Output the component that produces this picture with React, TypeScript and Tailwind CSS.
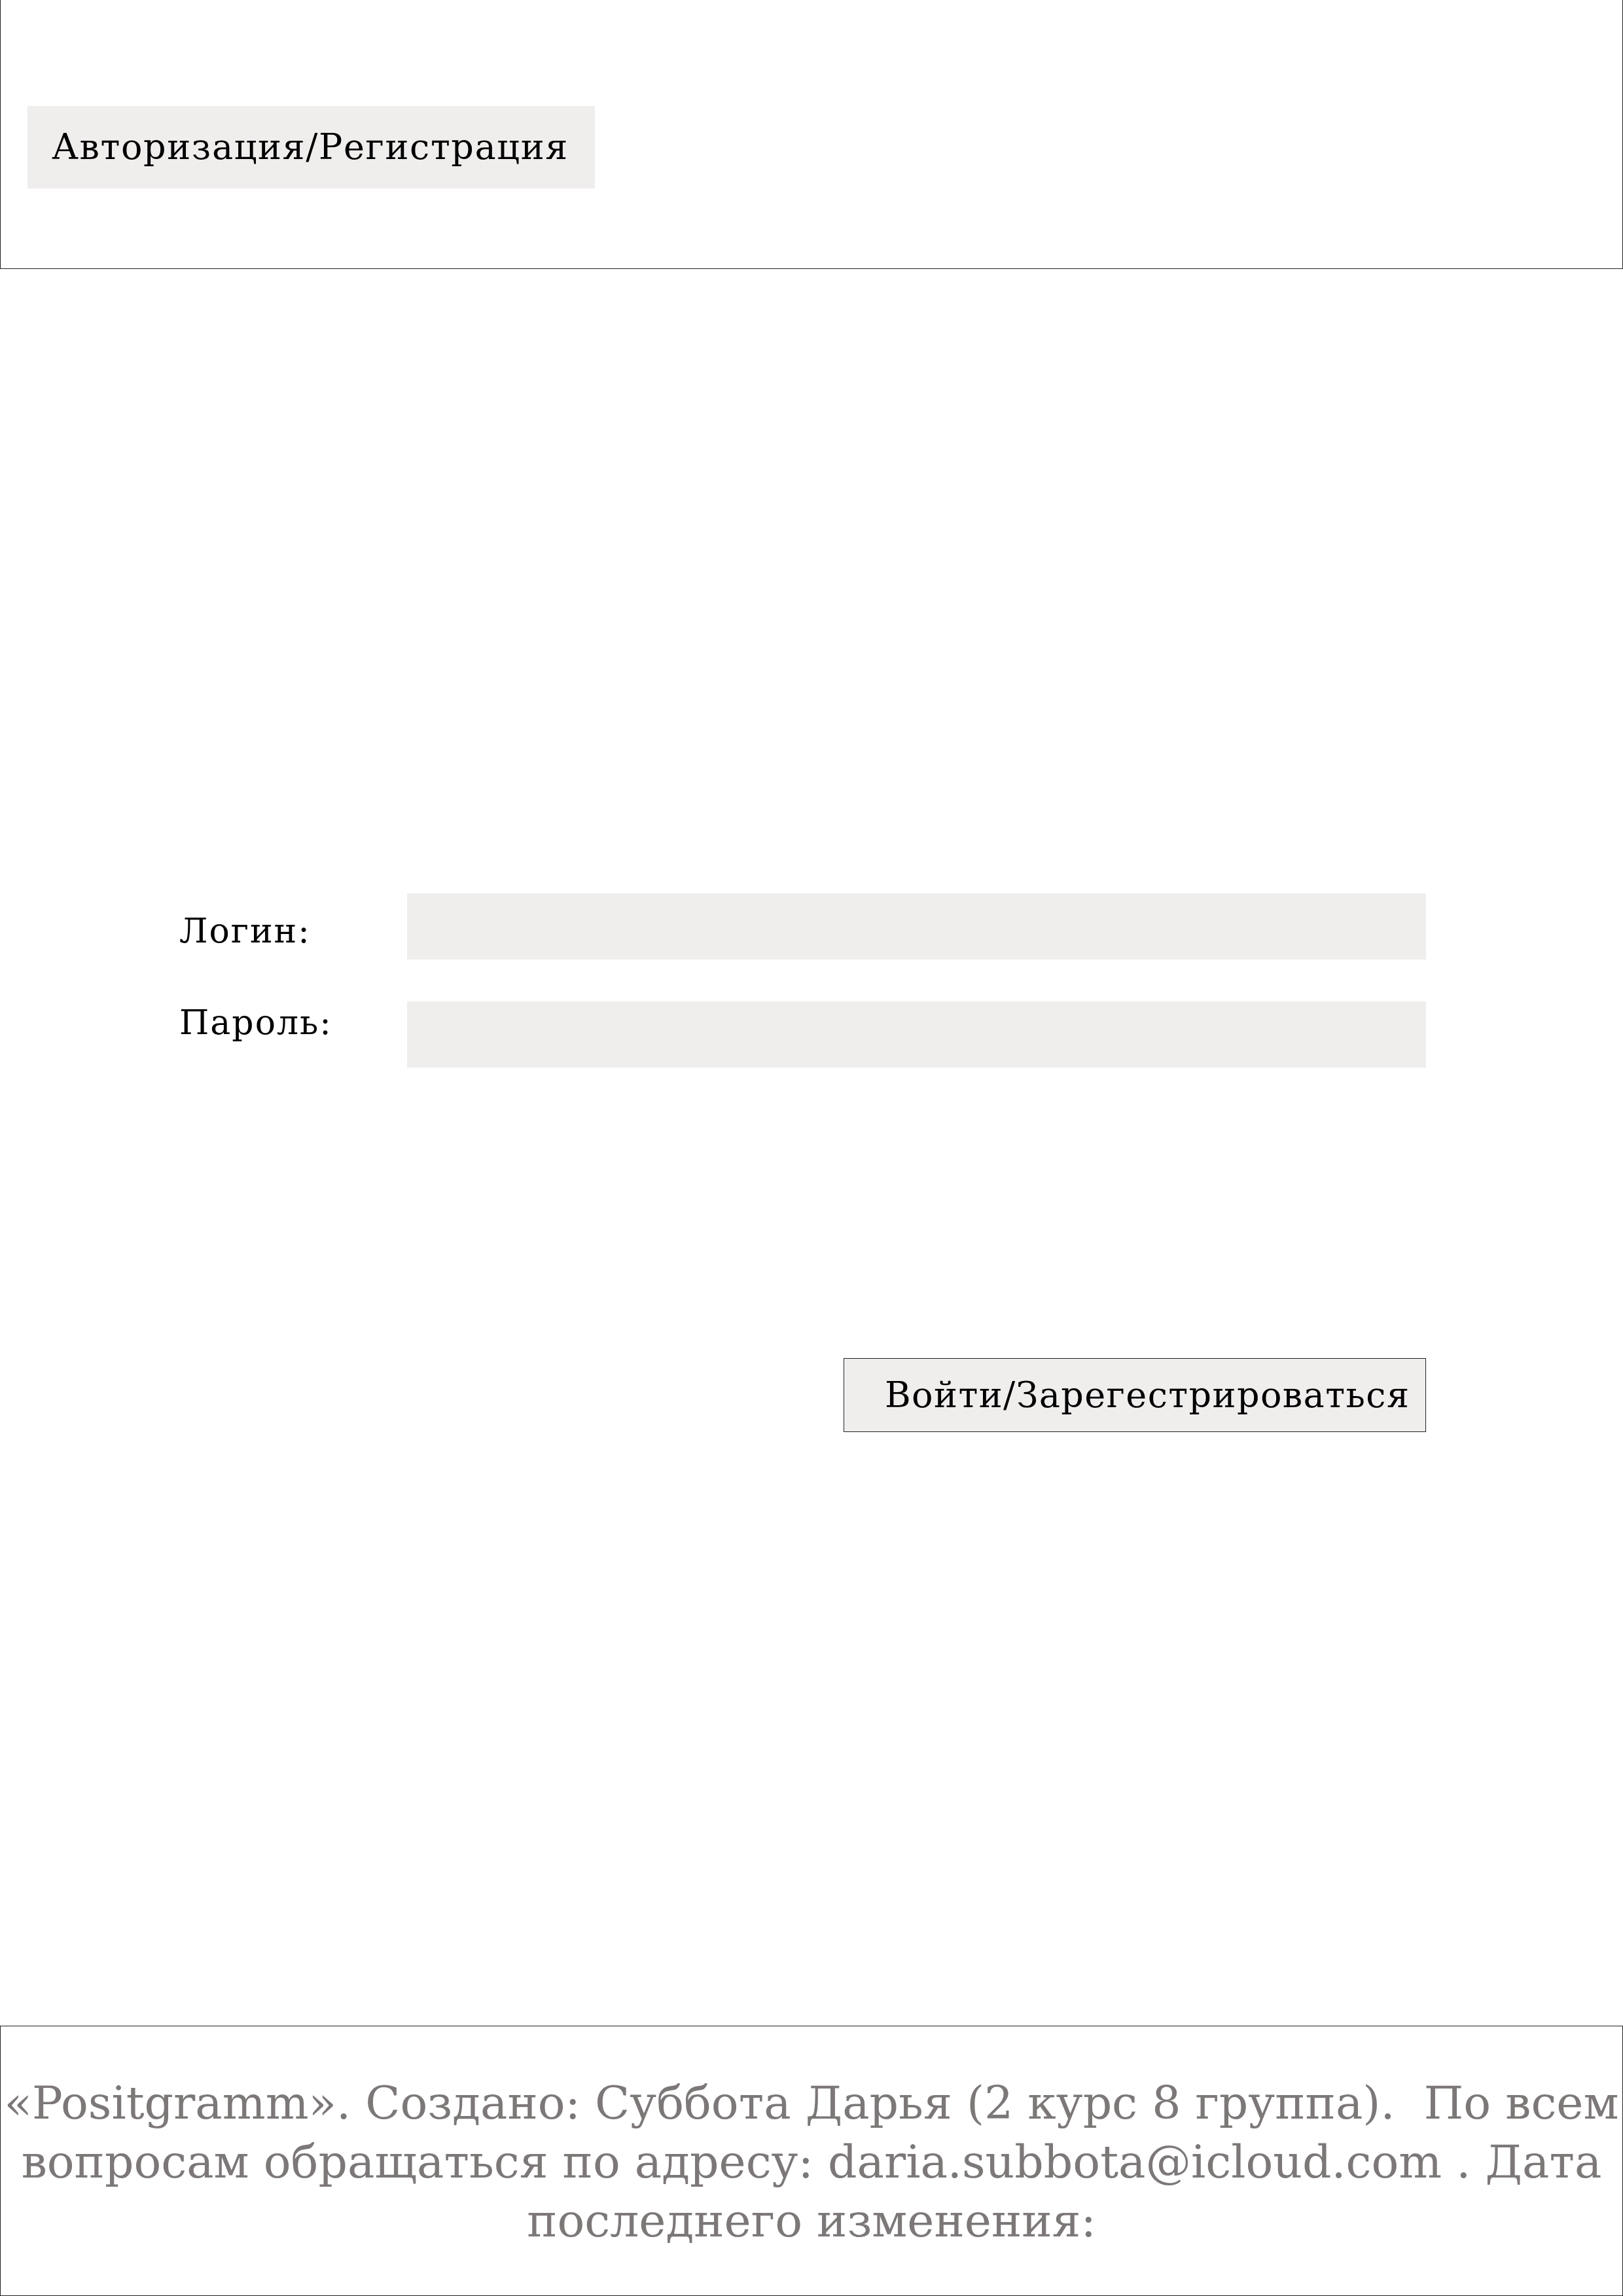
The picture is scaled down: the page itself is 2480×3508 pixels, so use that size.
const serif = "font-['DejaVu_Serif',serif]";

export default function App() {
  return (
    <div className={`min-h-[3508px] w-[2480px] flex flex-col bg-white text-black ${serif}`}>
      {/* Header */}
      <header className="h-[411px] border-l border-r border-b border-[#222] pt-[162px] pl-[41px]">
        <button className="w-[867px] h-[126px] bg-[#f0eded] flex items-center pl-[37px] text-[54px] leading-none tracking-[1.6px]">
          Авторизация/Регистрация
        </button>
      </header>

      {/* Form */}
      <main className="pt-[954px] pl-[274px]">
        <div className="grid grid-cols-[348px_1557px] gap-y-[64px]">
          <label className="pt-[31px] text-[52px] leading-none tracking-[2px]">Логин:</label>
          <input type="text" className="h-[101px] bg-[#f0eded] outline-none px-6 text-[48px]" />
          <label className="pt-[6px] text-[52px] leading-none tracking-[2px]">Пароль:</label>
          <input type="password" className="h-[101px] bg-[#f0eded] outline-none px-6 text-[48px]" />
        </div>
        <div className="w-[1905px] flex justify-end mt-[444px]">
          <button className="w-[890px] h-[113px] border border-[#222] bg-[#f0eded] flex items-center pl-[62px] text-[54px] leading-none tracking-[1.4px]">
            Войти/Зарегестрироваться
          </button>
        </div>
      </main>

      {/* Footer */}
      <footer className="mt-auto h-[413px] border border-[#222] pt-[72px] text-center text-[69.5px] leading-[90px] text-[#7d7878]">
        <p className="whitespace-nowrap">«Positgramm». Создано: Суббота Дарья (2 курс 8 группа).&nbsp; По всем</p>
        <p className="whitespace-nowrap">вопросам обращаться по адресу: daria.subbota@icloud.com . Дата</p>
        <p className="whitespace-nowrap">последнего изменения:</p>
      </footer>
    </div>
  );
}
